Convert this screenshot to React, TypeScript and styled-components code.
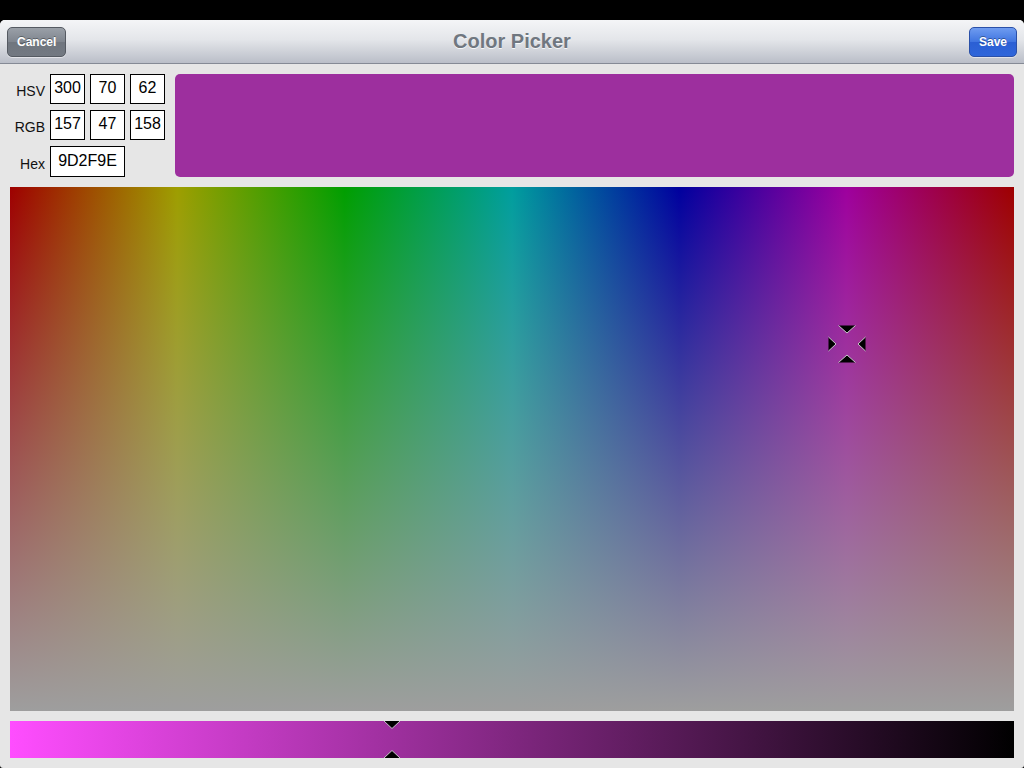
import React from "react";
import styled, { createGlobalStyle } from "styled-components";

const GlobalStyle = createGlobalStyle`
  html, body, #root {
    margin: 0;
    padding: 0;
    height: 100%;
  }
  body {
    background: #000;
    font-family: "Liberation Sans", Arial, Helvetica, sans-serif;
  }
`;

const hsv = { h: 300, s: 70, v: 62 };
const rgb = { r: 157, g: 47, b: 158 };
const hex = "9D2F9E";

const Screen = styled.div`
  height: 768px;
  width: 1024px;
  padding-top: 20px;
  box-sizing: border-box;
  background: #000;
`;

const Window = styled.div`
  height: 748px;
  display: flex;
  flex-direction: column;
  background: #e6e6e6;
  border-radius: 5px 5px 3px 3px;
  overflow: hidden;
`;

const NavBar = styled.div`
  height: 43px;
  flex: none;
  display: flex;
  align-items: center;
  justify-content: space-between;
  padding: 0 7px;
  background: linear-gradient(#f4f5f7 0%, #e4e6ea 45%, #babec8 100%);
  border-bottom: 1px solid #858a95;
  position: relative;
`;

const Title = styled.div`
  position: absolute;
  left: 0;
  right: 0;
  top: 0;
  bottom: 0;
  display: flex;
  align-items: center;
  justify-content: center;
  font-size: 20px;
  font-weight: bold;
  color: #707780;
  text-shadow: 0 1px 0 rgba(255, 255, 255, 0.8);
  pointer-events: none;
`;

type BarButtonProps = { $kind: "plain" | "done" };

const BarButton = styled.button<BarButtonProps>`
  position: relative;
  z-index: 1;
  height: 30px;
  padding: 0 9px;
  border-radius: 5px;
  font-family: inherit;
  font-size: 12px;
  font-weight: bold;
  color: #fff;
  text-shadow: 0 -1px 0 rgba(0, 0, 0, 0.35);
  cursor: pointer;
  border: 1px solid ${(p) => (p.$kind === "done" ? "#2a50a8" : "#555a62")};
  background: ${(p) =>
    p.$kind === "done"
      ? "linear-gradient(#6f9cf0 0%, #3f74e0 50%, #2b5fd4 51%, #2f66da 100%)"
      : "linear-gradient(#9aa0a8 0%, #7f858e 50%, #70767f 51%, #737982 100%)"};
  box-shadow: 0 1px 0 rgba(255, 255, 255, 0.5);
`;

const Content = styled.div`
  flex: 1;
  display: flex;
  flex-direction: column;
  gap: 10px;
  padding: 10px;
  min-height: 0;
`;

const TopRow = styled.div`
  display: flex;
  gap: 10px;
`;

const Fields = styled.div`
  display: grid;
  grid-template-columns: 35px 35px 35px 35px;
  grid-template-rows: 30px 30px 31px;
  column-gap: 5px;
  row-gap: 6px;
`;

const Label = styled.div`
  font-size: 14px;
  color: #111;
  text-align: right;
  align-self: center;
  padding-top: 4px;
`;

type FieldProps = { $span?: number };

const Field = styled.div<FieldProps>`
  grid-column: span ${(p) => p.$span || 1};
  box-sizing: border-box;
  border: 1px solid #000;
  background: #fff;
  font-size: 16px;
  color: #000;
  display: flex;
  align-items: center;
  justify-content: center;
  padding-bottom: 2px;
`;

const Swatch = styled.div<{ $color: string }>`
  flex: 1;
  border-radius: 5px;
  background: ${(p) => p.$color};
`;

const Plane = styled.div`
  flex: 1;
  position: relative;
  background:
    linear-gradient(rgba(158, 158, 158, 0), rgba(158, 158, 158, 1)),
    linear-gradient(
      to right,
      #9e0000 0%,
      #9e9e00 16.667%,
      #009e00 33.333%,
      #009e9e 50%,
      #00009e 66.667%,
      #9e009e 83.333%,
      #9e0000 100%
    );
`;

const Crosshair = styled.svg`
  position: absolute;
  width: 40px;
  height: 40px;
  transform: translate(-50%, -50%);
  overflow: visible;
`;

const ValueBar = styled.div<{ $from: string }>`
  height: 37px;
  flex: none;
  position: relative;
  background: linear-gradient(to right, ${(p) => p.$from}, #000);
`;

const Thumb = styled.svg<{ $edge: "top" | "bottom" }>`
  position: absolute;
  width: 16px;
  height: 8px;
  transform: translateX(-50%);
  ${(p) => (p.$edge === "top" ? "top: 0;" : "bottom: 0;")}
  overflow: visible;
`;

const Tri = ({ pts }: { pts: [number, number][] }) => (
  <g>
    <polygon points={pts.map((p) => p.join(",")).join(" ")} fill="#000" />
    <polyline
      points={[pts[0], pts[2], pts[1]].map((p) => p.join(",")).join(" ")}
      fill="none"
      stroke="#c9c3cc"
      strokeWidth={1}
    />
  </g>
);

const App = () => {
  const full = `rgb(${Math.round(255)}, ${Math.round(
    255 * (1 - hsv.s / 100)
  )}, 255)`;

  return (
    <Screen>
      <GlobalStyle />
      <Window>
        <NavBar>
          <BarButton $kind="plain">Cancel</BarButton>
          <Title>Color Picker</Title>
          <BarButton $kind="done">Save</BarButton>
        </NavBar>
        <Content>
          <TopRow>
            <Fields>
              <Label>HSV</Label>
              <Field>{hsv.h}</Field>
              <Field>{hsv.s}</Field>
              <Field>{hsv.v}</Field>
              <Label>RGB</Label>
              <Field>{rgb.r}</Field>
              <Field>{rgb.g}</Field>
              <Field>{rgb.b}</Field>
              <Label>Hex</Label>
              <Field $span={2}>{hex}</Field>
            </Fields>
            <Swatch $color={`#${hex}`} />
          </TopRow>
          <Plane>
            <Crosshair
              viewBox="-20 -20 40 40"
              style={{
                left: `${(hsv.h / 360) * 100}%`,
                top: `${(1 - hsv.s / 100) * 100}%`,
              }}
            >
              <Tri pts={[[-8.5, -18.5], [8.5, -18.5], [0, -11]]} />
              <Tri pts={[[-8.5, 18.5], [8.5, 18.5], [0, 11]]} />
              <Tri pts={[[-18.5, -7], [-18.5, 7], [-11, 0]]} />
              <Tri pts={[[18.5, -7], [18.5, 7], [11, 0]]} />
            </Crosshair>
          </Plane>
          <ValueBar $from={full}>
            <Thumb
              $edge="top"
              viewBox="0 0 16 8"
              style={{ left: `${(1 - hsv.v / 100) * 100}%` }}
            >
              <Tri pts={[[0, 0], [16, 0], [8, 7.5]]} />
            </Thumb>
            <Thumb
              $edge="bottom"
              viewBox="0 0 16 8"
              style={{ left: `${(1 - hsv.v / 100) * 100}%` }}
            >
              <Tri pts={[[0, 8], [16, 8], [8, 0.5]]} />
            </Thumb>
          </ValueBar>
        </Content>
      </Window>
    </Screen>
  );
};

export default App;
